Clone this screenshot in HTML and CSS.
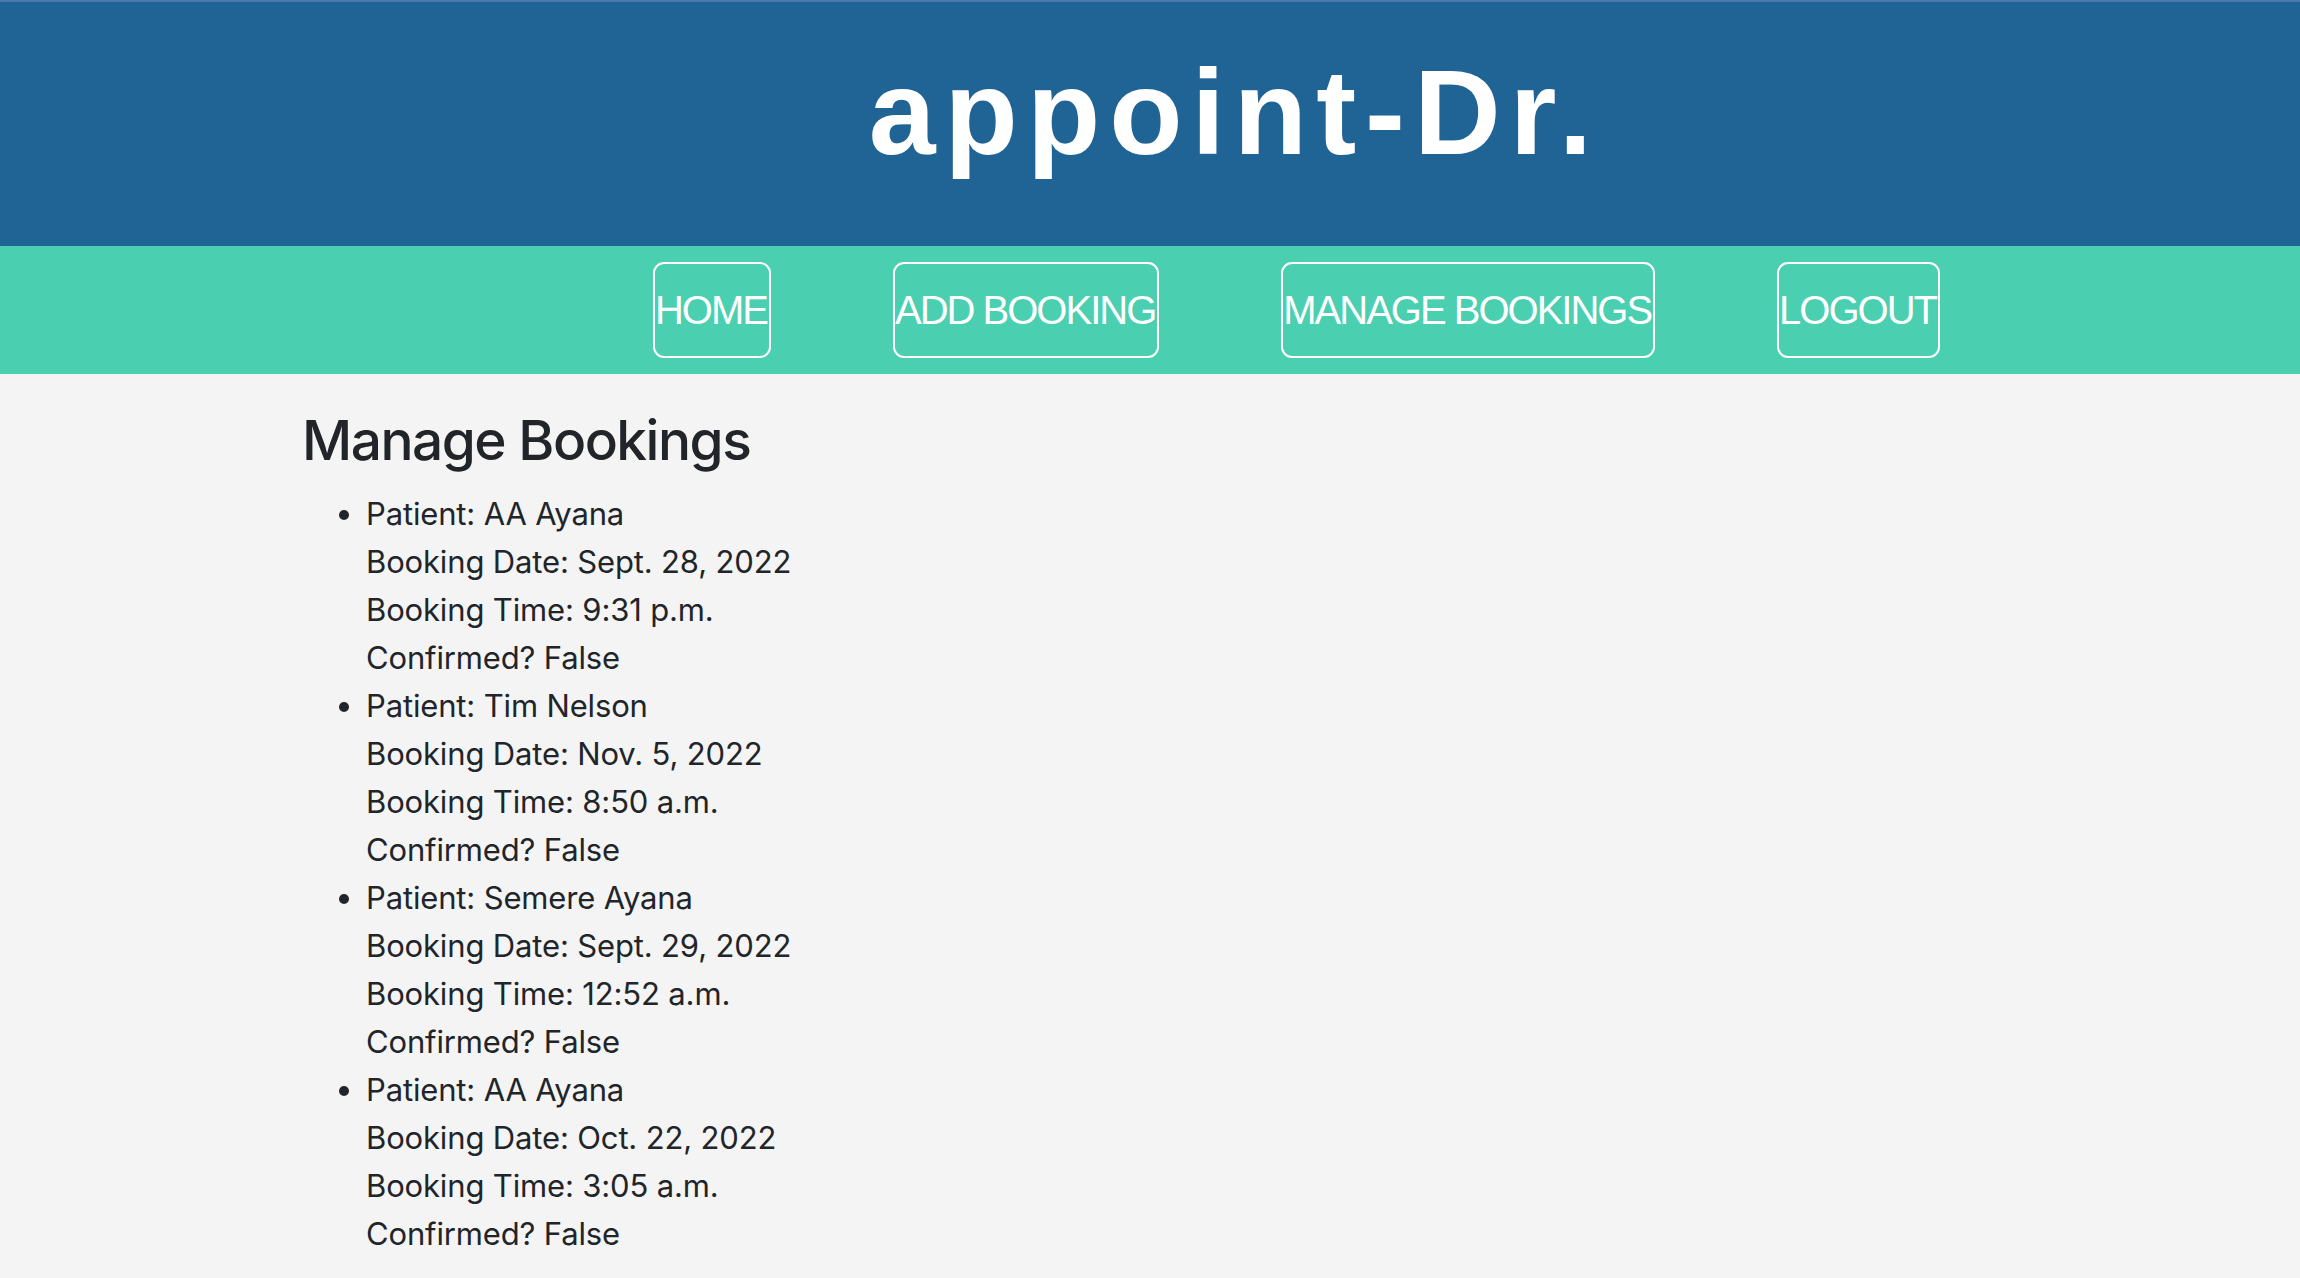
FILE: index.html
```html
<!DOCTYPE html>
<html lang="en">
<head>
<meta charset="utf-8">
<title>appoint-Dr.</title>
<link rel="stylesheet" href="styles.css">
</head>
<body>
<header class="site-header">
  <h1 class="brand">appoint-Dr.</h1>
</header>
<nav class="main-nav">
  <a class="nav-btn" href="#">HOME</a>
  <a class="nav-btn" href="#">ADD BOOKING</a>
  <a class="nav-btn" href="#">MANAGE BOOKINGS</a>
  <a class="nav-btn" href="#">LOGOUT</a>
</nav>
<main class="content">
  <h2 class="page-title">Manage Bookings</h2>
  <ul class="bookings">
    <li>Patient: AA Ayana<br>Booking Date: Sept. 28, 2022<br>Booking Time: 9:31 p.m.<br>Confirmed? False</li>
    <li>Patient: Tim Nelson<br>Booking Date: Nov. 5, 2022<br>Booking Time: 8:50 a.m.<br>Confirmed? False</li>
    <li>Patient: Semere Ayana<br>Booking Date: Sept. 29, 2022<br>Booking Time: 12:52 a.m.<br>Confirmed? False</li>
    <li>Patient: AA Ayana<br>Booking Date: Oct. 22, 2022<br>Booking Time: 3:05 a.m.<br>Confirmed? False</li>
  </ul>
</main>
</body>
</html>
```
FILE: styles.css
```css
html, body {
  margin: 0;
  padding: 0;
}
body {
  background: #f4f4f4;
  color: #212529;
  font-family: Inter, "Noto Sans", sans-serif;
  height: 1278px;
  overflow: hidden;
}
.site-header {
  background: #206496;
  border-top: 2px solid #4a7aae;
  height: 244px;
  display: flex;
  align-items: center;
  justify-content: center;
  padding-left: 170px;
}
.brand {
  margin: 0;
  font-family: "Liberation Sans", Arial, sans-serif;
  font-weight: 700;
  font-size: 120px;
  letter-spacing: 9px;
  color: #ffffff;
  line-height: 1;
  position: relative;
  top: -12px;
}
.main-nav {
  background: #4acfb0;
  height: 128px;
  display: flex;
  align-items: center;
  justify-content: center;
  gap: 122px;
  padding-left: 293px;
}
.nav-btn {
  box-sizing: border-box;
  height: 96px;
  display: flex;
  align-items: center;
  border: 2px solid #ffffff;
  border-radius: 11px;
  color: #ffffff;
  text-decoration: none;
  font-family: "Liberation Sans", Arial, sans-serif;
  font-size: 40px;
  letter-spacing: -2px;
  padding: 0 2px 0 0;
}
.content {
  padding: 33px 0 0 302px;
}
.page-title {
  margin: 0 0 16px;
  font-size: 55px;
  font-weight: 500;
  line-height: 67px;
  letter-spacing: -1.5px;
}
.bookings {
  margin: 0;
  padding-left: 64px;
  font-size: 31px;
  line-height: 48px;
  letter-spacing: -0.15px;
}
```
